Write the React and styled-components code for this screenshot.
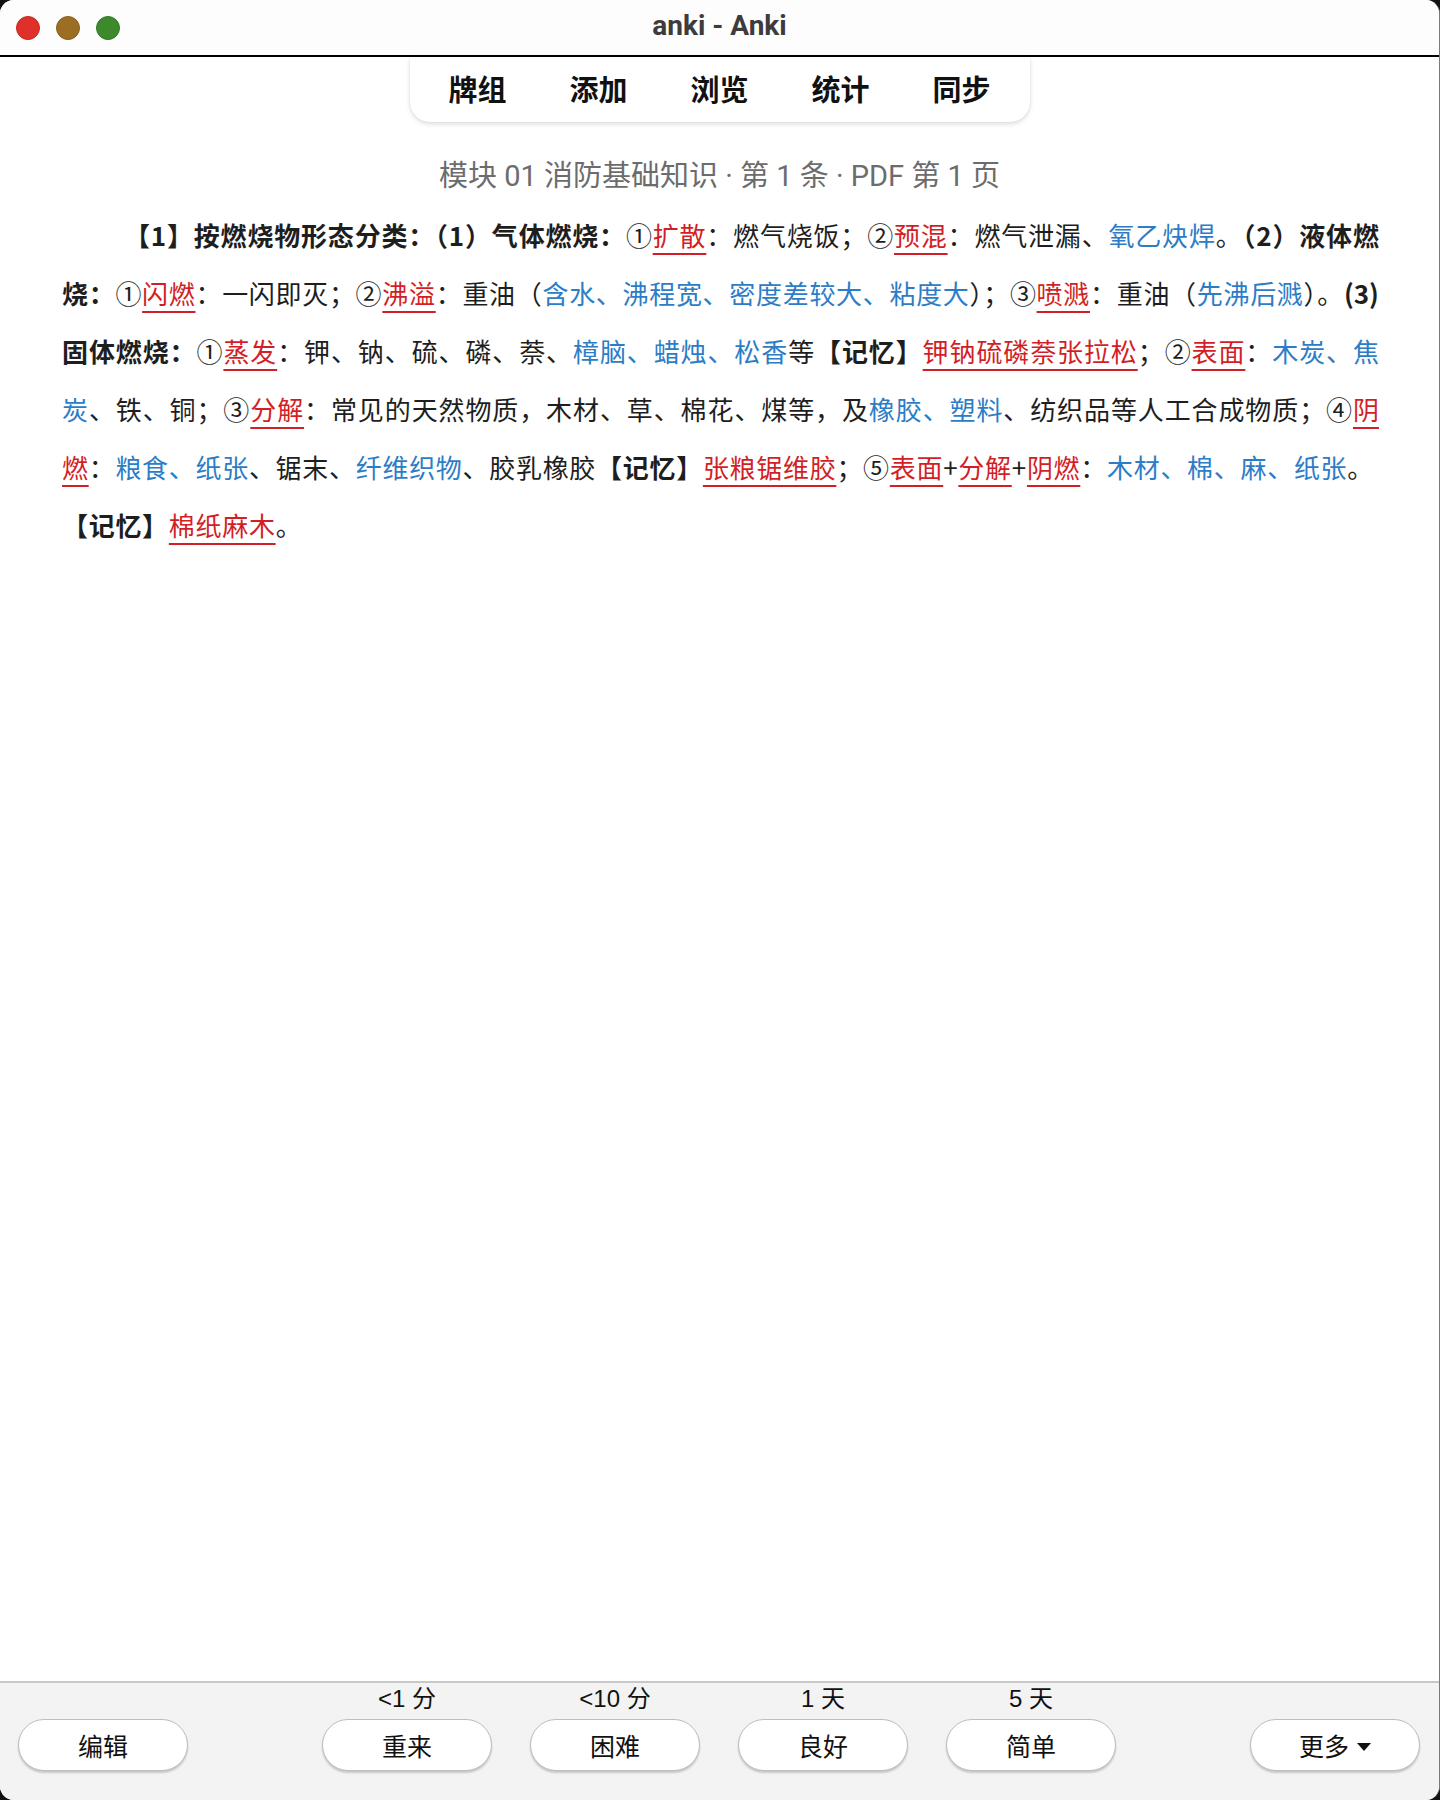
import React from "react";
import styled, { createGlobalStyle } from "styled-components";

const Global = createGlobalStyle`
  html, body { margin: 0; padding: 0; background: #121212; }
  * { box-sizing: border-box; }
`;

const CJK = `"Noto Sans CJK SC", "Noto Sans", sans-serif`;
const UI = `Roboto, "Liberation Sans", "Noto Sans CJK SC", sans-serif`;

const Window = styled.div`
  width: 1440px;
  height: 1800px;
  border-radius: 14px;
  overflow: hidden;
  background: #ffffff;
  display: flex;
  flex-direction: column;
  border-right: 1px solid #7a7a7a;
`;

const TitleBar = styled.div`
  height: 57px;
  flex: none;
  background: #fdfdfd;
  border-bottom: 2px solid #000;
  display: grid;
  grid-template-columns: 1fr auto 1fr;
  align-items: center;
  padding: 0 16px;
`;

const Lights = styled.div`
  display: flex;
  gap: 16px;
  align-items: center;
  margin-top: 1px;
`;

const Light = styled.span`
  width: 24px;
  height: 24px;
  border-radius: 50%;
  background: ${(p) => p.$c};
  border: 1px solid ${(p) => p.$b};
`;

const Title = styled.div`
  font-family: ${UI};
  font-weight: 700;
  font-size: 28px;
  color: #3c3c3c;
  margin-top: -4px;
`;

const Main = styled.main`
  flex: 1;
  display: flex;
  flex-direction: column;
  align-items: center;
  background: #fff;
`;

const Nav = styled.nav`
  display: flex;
  gap: 61px;
  padding: 0 38px;
  height: 65px;
  align-items: center;
  background: #fff;
  border-radius: 0 0 20px 20px;
  box-shadow: 0 2px 5px rgba(0, 0, 0, 0.14), 0 0 1px rgba(0, 0, 0, 0.12);
`;

const NavItem = styled.span`
  font-family: ${CJK};
  font-weight: 700;
  font-size: 29px;
  color: #111;
  width: 60px;
  text-align: center;
  line-height: 1;
  margin-top: -2px;
`;

const Subtitle = styled.div`
  margin-top: 36px;
  font-family: ${UI};
  font-size: 29px;
  line-height: 36px;
  color: #6c6c6c;
`;

const Body = styled.div`
  align-self: stretch;
  margin-top: 12px;
  padding: 0 60px 0 62px;
  font-family: ${CJK};
  font-size: 26px;
  color: #1e1e1e;
`;

const Line = styled.div`
  height: 58px;
  line-height: 58px;
  white-space: nowrap;
  text-align: ${(p) => (p.$justify ? "justify" : "left")};
  text-align-last: ${(p) => (p.$justify ? "justify" : "auto")};
  text-indent: ${(p) => p.$indent || 0}px;
  letter-spacing: ${(p) => (p.$justify ? "0" : "0.7px")};
`;

const B = styled.span`
  font-weight: 700;
`;

const Red = styled.span`
  color: #d21f27;
  text-decoration: underline;
  text-decoration-thickness: 2px;
  text-underline-offset: 7px;
`;

const Blue = styled.span`
  color: #2c7dc6;
`;

const Footer = styled.footer`
  flex: none;
  height: 119px;
  background: #f3f3f3;
  border-top: 2px solid #c8c8c8;
  display: grid;
  grid-template-columns: 1fr auto 1fr;
  align-items: end;
  padding: 0 19px 29px 18px;
`;

const Side = styled.div`
  display: flex;
  justify-content: ${(p) => (p.$end ? "flex-end" : "flex-start")};
`;

const Answers = styled.div`
  display: flex;
  gap: 38px;
`;

const Answer = styled.div`
  display: flex;
  flex-direction: column;
  align-items: center;
  gap: 6px;
`;

const Due = styled.div`
  font-family: "Liberation Sans", "Noto Sans CJK SC", sans-serif;
  font-size: 24px;
  line-height: 28px;
  color: #111;
`;

const Button = styled.button`
  width: 170px;
  height: 52px;
  border-radius: 26px;
  background: #fff;
  border: 1.5px solid #bdbdbd;
  box-shadow: 0 2px 2px rgba(0, 0, 0, 0.18);
  font-family: "Liberation Sans", "Noto Sans CJK SC", sans-serif;
  font-size: 25px;
  color: #111;
  display: flex;
  align-items: center;
  justify-content: center;
  gap: 8px;
  padding: 0;
`;

const Caret = styled.span`
  width: 0;
  height: 0;
  border-left: 7.5px solid transparent;
  border-right: 7.5px solid transparent;
  border-top: 8px solid #111;
  margin-top: 3px;
`;

const answers = [
  { due: "<1 分", label: "重来" },
  { due: "<10 分", label: "困难" },
  { due: "1 天", label: "良好" },
  { due: "5 天", label: "简单" },
];

export default function App() {
  return (
    <>
      <Global />
      <Window>
        <TitleBar>
          <Lights>
            <Light $c="#e0302a" $b="#c42a22" />
            <Light $c="#9b6e24" $b="#86601f" />
            <Light $c="#3c8a2c" $b="#347a26" />
          </Lights>
          <Title>anki - Anki</Title>
          <div />
        </TitleBar>
        <Main>
          <Nav>
            {["牌组", "添加", "浏览", "统计", "同步"].map((t) => (
              <NavItem key={t}>{t}</NavItem>
            ))}
          </Nav>
          <Subtitle>模块 01 消防基础知识 · 第 1 条 · PDF 第 1 页</Subtitle>
          <Body>
            <Line $justify $indent={62}>
              <B>【1】按燃烧物形态分类：（1）气体燃烧：</B>①<Red>扩散</Red>：燃气烧饭；②<Red>预混</Red>：燃气泄漏、<Blue>氧乙炔焊</Blue>。<B>（2）液体燃</B>
            </Line>
            <Line $justify>
              <B>烧：</B>①<Red>闪燃</Red>：一闪即灭；②<Red>沸溢</Red>：重油（<Blue>含水、沸程宽、密度差较大、粘度大</Blue>）；③<Red>喷溅</Red>：重油（<Blue>先沸后溅</Blue>）。<B>(3)</B>
            </Line>
            <Line $justify>
              <B>固体燃烧：</B>①<Red>蒸发</Red>：钾、钠、硫、磷、萘、<Blue>樟脑、蜡烛、松香</Blue>等<B>【记忆】</B><Red>钾钠硫磷萘张拉松</Red>；②<Red>表面</Red>：<Blue>木炭、焦</Blue>
            </Line>
            <Line $justify>
              <Blue>炭</Blue>、铁、铜；③<Red>分解</Red>：常见的天然物质，木材、草、棉花、煤等，及<Blue>橡胶、塑料</Blue>、纺织品等人工合成物质；④<Red>阴</Red>
            </Line>
            <Line>
              <Red>燃</Red>：<Blue>粮食、纸张</Blue>、锯末、<Blue>纤维织物</Blue>、胶乳橡胶<B>【记忆】</B><Red>张粮锯维胶</Red>；⑤<Red>表面</Red>+<Red>分解</Red>+<Red>阴燃</Red>：<Blue>木材、棉、麻、纸张</Blue>。
            </Line>
            <Line>
              <B>【记忆】</B><Red>棉纸麻木</Red>。
            </Line>
          </Body>
        </Main>
        <Footer>
          <Side>
            <Button>编辑</Button>
          </Side>
          <Answers>
            {answers.map((a) => (
              <Answer key={a.label}>
                <Due>{a.due}</Due>
                <Button>{a.label}</Button>
              </Answer>
            ))}
          </Answers>
          <Side $end>
            <Button>
              更多
              <Caret />
            </Button>
          </Side>
        </Footer>
      </Window>
    </>
  );
}
